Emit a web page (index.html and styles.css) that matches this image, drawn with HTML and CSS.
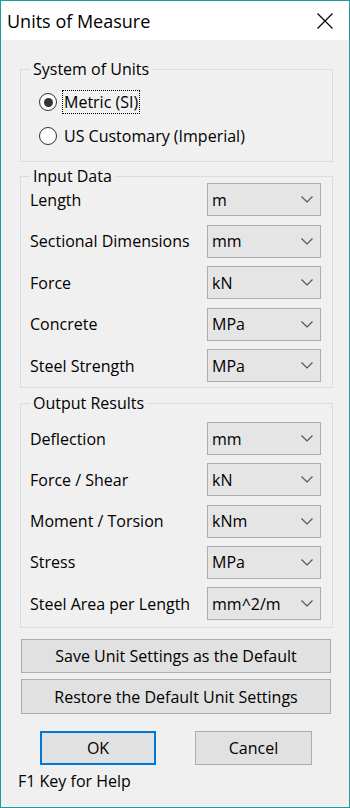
FILE: index.html
```html
<!DOCTYPE html>
<html lang="en">
<head>
    <meta charset="UTF-8">
    <meta name="viewport" content="width=device-width, initial-scale=1.0">
    <title>Units of Measure</title>
    <link rel="stylesheet" href="styles.css">
</head>
<body>
    <div class="window">
        <div class="titlebar">
            <span class="title">Units of Measure</span>
            <svg class="close" width="16" height="16" viewBox="0 0 16 16">
                <path d="M0.5 0.5 L15.5 15.5 M15.5 0.5 L0.5 15.5" stroke="#000" stroke-width="1.2" fill="none"/>
            </svg>
        </div>

        <div class="content">
            <!-- System of units -->
            <fieldset class="group group-system">
                <legend>System of Units</legend>
                <div class="radio">
                    <span class="radio-dot checked"></span>
                    <span class="radio-text focus">Metric (SI)</span>
                </div>
                <div class="radio">
                    <span class="radio-dot"></span>
                    <span class="radio-text">US Customary (Imperial)</span>
                </div>
            </fieldset>

            <!-- Input data -->
            <fieldset class="group group-input">
                <legend>Input Data</legend>
                <div class="fields fields-input">
                    <span class="label">Length</span>
                    <div class="combo">m<svg width="12" height="7" viewBox="0 0 12 7"><polyline points="0.5,0.5 6,6 11.5,0.5" fill="none" stroke="#555" stroke-width="1.2"/></svg></div>
                    <span class="label">Sectional Dimensions</span>
                    <div class="combo">mm<svg width="12" height="7" viewBox="0 0 12 7"><polyline points="0.5,0.5 6,6 11.5,0.5" fill="none" stroke="#555" stroke-width="1.2"/></svg></div>
                    <span class="label">Force</span>
                    <div class="combo">kN<svg width="12" height="7" viewBox="0 0 12 7"><polyline points="0.5,0.5 6,6 11.5,0.5" fill="none" stroke="#555" stroke-width="1.2"/></svg></div>
                    <span class="label">Concrete</span>
                    <div class="combo">MPa<svg width="12" height="7" viewBox="0 0 12 7"><polyline points="0.5,0.5 6,6 11.5,0.5" fill="none" stroke="#555" stroke-width="1.2"/></svg></div>
                    <span class="label">Steel Strength</span>
                    <div class="combo">MPa<svg width="12" height="7" viewBox="0 0 12 7"><polyline points="0.5,0.5 6,6 11.5,0.5" fill="none" stroke="#555" stroke-width="1.2"/></svg></div>
                </div>
            </fieldset>

            <!-- Output results -->
            <fieldset class="group group-output">
                <legend>Output Results</legend>
                <div class="fields fields-output">
                    <span class="label">Deflection</span>
                    <div class="combo">mm<svg width="12" height="7" viewBox="0 0 12 7"><polyline points="0.5,0.5 6,6 11.5,0.5" fill="none" stroke="#555" stroke-width="1.2"/></svg></div>
                    <span class="label">Force / Shear</span>
                    <div class="combo">kN<svg width="12" height="7" viewBox="0 0 12 7"><polyline points="0.5,0.5 6,6 11.5,0.5" fill="none" stroke="#555" stroke-width="1.2"/></svg></div>
                    <span class="label">Moment / Torsion</span>
                    <div class="combo">kNm<svg width="12" height="7" viewBox="0 0 12 7"><polyline points="0.5,0.5 6,6 11.5,0.5" fill="none" stroke="#555" stroke-width="1.2"/></svg></div>
                    <span class="label">Stress</span>
                    <div class="combo">MPa<svg width="12" height="7" viewBox="0 0 12 7"><polyline points="0.5,0.5 6,6 11.5,0.5" fill="none" stroke="#555" stroke-width="1.2"/></svg></div>
                    <span class="label">Steel Area per Length</span>
                    <div class="combo">mm^2/m<svg width="12" height="7" viewBox="0 0 12 7"><polyline points="0.5,0.5 6,6 11.5,0.5" fill="none" stroke="#555" stroke-width="1.2"/></svg></div>
                </div>
            </fieldset>

            <button class="btn btn-wide btn-save">Save Unit Settings as the Default</button>
            <button class="btn btn-wide btn-restore">Restore the Default Unit Settings</button>

            <div class="actions">
                <button class="btn btn-default">OK</button>
                <button class="btn btn-cancel">Cancel</button>
            </div>

            <p class="help">F1 Key for Help</p>
        </div>
    </div>
</body>
</html>
```

FILE: styles.css
```css
* {
    box-sizing: border-box;
    margin: 0;
    padding: 0;
}

body {
    font-family: "Open Sans", "Noto Sans", sans-serif;
    font-size: 16px;
    color: #000;
    background-color: #f0f0f0;
}

.window {
    width: 350px;
    height: 808px;
    border: 1px solid #1e9c9c;
    background-color: #f0f0f0;
    display: flex;
    flex-direction: column;
}

.titlebar {
    height: 39px;
    background-color: #fff;
    display: flex;
    align-items: center;
    justify-content: space-between;
    padding: 0 16px 0 6px;
}

.title {
    font-size: 18px;
    color: #000;
}

.close {
    display: block;
}

.content {
    padding: 22px 16px 0 19px;
}

/* Group boxes */
.group {
    border: 1px solid #dcdcdc;
    padding: 0 11px 0 9px;
}

.group legend {
    line-height: 14px;
    padding: 0 3px;
}

.group-system {
    padding-top: 9px;
    padding-bottom: 8px;
}

.group-input {
    margin-top: 7px;
    padding-bottom: 5px;
}

.group-output {
    margin-top: 8px;
    padding-top: 12px;
    padding-bottom: 7px;
}

/* Radio buttons */
.radio {
    height: 34px;
    display: flex;
    align-items: center;
    padding-left: 9px;
}

.radio-dot {
    width: 18px;
    height: 18px;
    border: 1px solid #333;
    border-radius: 50%;
    background-color: #fff;
    display: flex;
    align-items: center;
    justify-content: center;
    margin-right: 5px;
}

.radio-dot.checked::after {
    content: "";
    width: 9px;
    height: 9px;
    border-radius: 50%;
    background-color: #333;
}

.radio-text {
    padding: 0 1px;
    line-height: 22px;
    border: 1px solid transparent;
}

.radio-text.focus {
    border: 1px dotted #000;
}

/* Label + combo rows */
.fields {
    display: grid;
    grid-template-columns: 1fr 114px;
    align-items: center;
}

.fields-input {
    row-gap: 8.5px;
}

.fields-output {
    row-gap: 8.25px;
}

.combo {
    height: 33px;
    background-color: #e5e5e5;
    border: 1px solid #adadad;
    display: flex;
    align-items: center;
    justify-content: space-between;
    padding: 0 7px 0 4px;
}

.combo svg {
    display: block;
}

/* Buttons */
.btn {
    font-family: inherit;
    font-size: 16px;
    color: #000;
    background-color: #e1e1e1;
    border: 1px solid #adadad;
    height: 34px;
    cursor: pointer;
}

.btn-wide {
    display: block;
    width: 310px;
    margin-left: 1px;
}

.btn-save {
    margin-top: 11px;
}

.btn-restore {
    margin-top: 6px;
    height: 35px;
}

.actions {
    display: flex;
    gap: 39px;
    margin-top: 17px;
    padding-left: 20px;
}

.btn-default {
    width: 116px;
    border: 2px solid #0078d7;
}

.btn-cancel {
    width: 117px;
}

.help {
    margin-top: 6px;
    margin-left: -2px;
    line-height: 20px;
}
```
